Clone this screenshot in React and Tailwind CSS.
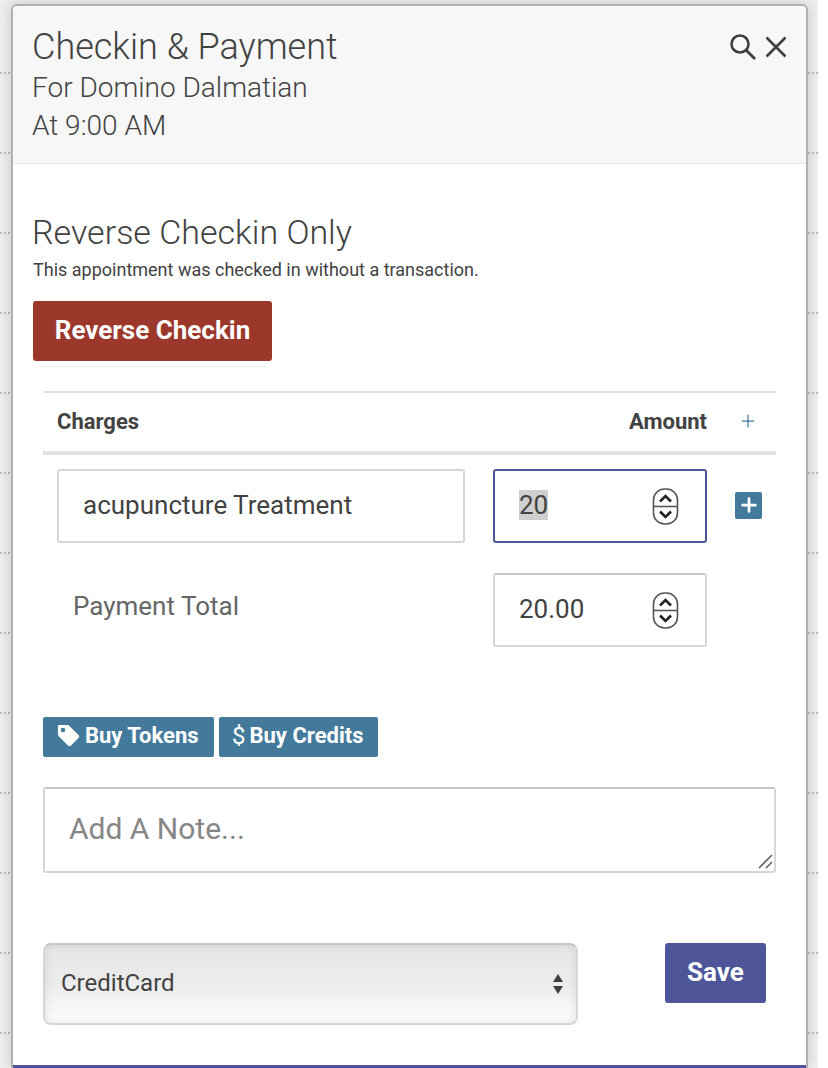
import React from 'react';
import { Plus } from 'lucide-react';

function Spinner() {
  return (
    <svg width="28" height="37" viewBox="0 0 28 37" fill="none" className="shrink-0">
      <rect x="2.5" y="1" width="24" height="35" rx="11" stroke="#555" strokeWidth="1.6" />
      <line x1="2.5" y1="18.5" x2="26.5" y2="18.5" stroke="#555" strokeWidth="1.6" />
      <path d="M9 13.5 L14.5 8 L20 13.5" stroke="#222" strokeWidth="2.6" />
      <path d="M9 23.5 L14.5 29 L20 23.5" stroke="#222" strokeWidth="2.6" />
    </svg>
  );
}

function TagIcon() {
  return (
    <svg width="23" height="23" viewBox="0 0 25 25" className="shrink-0">
      <path
        fill="#fff"
        fillRule="evenodd"
        d="M2 1 H11 C12 1 13 1.5 13.6 2.1 L23.4 11.9 C24.4 12.9 24.4 14.2 23.4 15.2 L15.2 23.4 C14.2 24.4 12.9 24.4 11.9 23.4 L2.1 13.6 C1.4 12.9 1 12 1 11 V2 C1 1.4 1.4 1 2 1 Z M6.5 4 A2.5 2.5 0 1 0 6.5 9 A2.5 2.5 0 1 0 6.5 4 Z"
      />
    </svg>
  );
}

function SearchIcon() {
  return (
    <svg width="28" height="28" viewBox="0 0 28 28" fill="none" className="shrink-0">
      <circle cx="11" cy="11" r="8.5" stroke="#3f3f3f" strokeWidth="2.6" />
      <path d="M17.5 17.5 L26 26" stroke="#3f3f3f" strokeWidth="2.8" />
    </svg>
  );
}

function CloseIcon() {
  return (
    <svg width="22" height="22" viewBox="0 0 22 22" fill="none" className="shrink-0">
      <path d="M1.5 1.5 L20.5 20.5 M20.5 1.5 L1.5 20.5" stroke="#3f3f3f" strokeWidth="2.6" />
    </svg>
  );
}

function Backdrop() {
  const rows = [72, 152, 232, 312, 392, 472, 552, 632, 712, 792, 872, 952, 1032];
  return (
    <div className="absolute inset-0 flex">
      <div className="w-[818px] h-full bg-[#efefef] relative">
        {rows.map((y) => (
          <div
            key={y}
            className="absolute left-0 right-0 border-t-2 border-dotted border-[#bdbdbd]"
            style={{ top: y }}
          />
        ))}
      </div>
      <div className="flex-1 bg-white" />
    </div>
  );
}

export default function App() {
  return (
    <div className="relative w-[828px] h-[1068px] overflow-hidden bg-white text-[#424242] font-['Roboto',sans-serif]">
      <Backdrop />

      <div className="absolute left-[11px] top-[4px] w-[797px] h-[1064px] bg-white border-2 border-b-0 border-[#b0b0b0] rounded-t-[6px] shadow-[0_0_14px_rgba(0,0,0,0.18)] flex flex-col overflow-hidden">
        {/* Header */}
        <div className="h-[158px] shrink-0 bg-[#f7f7f7] border-b border-[#e9e9e9] pl-[19px] pr-[19px] pt-[19px] flex justify-between">
          <div>
            <div className="text-[36px] leading-[44px] font-light">Checkin &amp; Payment</div>
            <div className="text-[28px] leading-[38px] font-light">For Domino Dalmatian</div>
            <div className="text-[28px] leading-[38px] font-light">At 9:00 AM</div>
          </div>
          <div className="flex items-start gap-[8px] pt-[8px]">
            <SearchIcon />
            <div className="pt-[3px]">
              <CloseIcon />
            </div>
          </div>
        </div>

        {/* Body */}
        <div className="flex-1 flex flex-col pl-[20px] pr-[30px]">
          <div className="mt-[44px] -ml-px text-[34px] leading-[48px] font-light">Reverse Checkin Only</div>
          <div className="mt-[2px] text-[18px] leading-[24px]">This appointment was checked in without a transaction.</div>
          <button className="mt-[19px] w-[239px] h-[60px] pb-[2px] rounded-[3px] bg-[#9c372c] text-white text-[26px] font-bold">
            Reverse Checkin
          </button>

          <div className="ml-[10px] mt-[30px]">
            <div className="h-[64px] pb-[2px] border-t-2 border-b-[4px] border-t-[#dfe1e4] border-b-[#dfe1e4] flex items-center pl-[14px]">
              <div className="text-[22px] font-bold flex-1">Charges</div>
              <div className="text-[22px] font-bold text-right">Amount</div>
              <div className="w-[69px] flex justify-end pr-[18px]">
                <Plus size={20} strokeWidth={1.5} className="text-[#437a9c]" />
              </div>
            </div>

            <div className="flex items-center pl-[14px] mt-[14px]">
              <div className="w-[408px] h-[74px] pb-[2px] border-2 border-[#d6d6da] rounded-[3px] flex items-center pl-[24px] text-[26px]">
                acupuncture Treatment
              </div>
              <div className="ml-[28px] w-[214px] h-[74px] border-2 border-[#4e5699] rounded-[3px] flex items-center justify-between pl-[24px] pr-[26px] text-[26px]">
                <span className="bg-[#cfcfcf] leading-[30px] mb-[2px]">20</span>
                <Spinner />
              </div>
              <button className="ml-[28px] mb-[2px] w-[27px] h-[27px] rounded-[2px] bg-[#437a9c] flex items-center justify-center">
                <Plus size={22} strokeWidth={3} className="text-white" />
              </button>
            </div>

            <div className="flex items-center pl-[30px] mt-[30px]">
              <div className="w-[420px] text-[26px] text-[#666] pb-[8px]">Payment Total</div>
              <div className="w-[214px] h-[74px] border-2 border-[#d6d6da] border-t-[#c6c6cc] rounded-[3px] flex items-center justify-between pl-[24px] pr-[26px] text-[26px]">
                <span className="mb-[2px]">20.00</span>
                <Spinner />
              </div>
            </div>

            <div className="flex gap-[5px] mt-[70px]">
              <button className="w-[171px] h-[40px] pl-[14px] pb-[3px] rounded-[2px] bg-[#437a9c] text-white text-[22px] font-bold flex items-center gap-[5px]">
                <TagIcon />
                Buy Tokens
              </button>
              <button className="w-[159px] h-[40px] pl-[13px] pb-[3px] rounded-[2px] bg-[#437a9c] text-white text-[22px] font-bold flex items-center">
                <span className="font-normal text-[24px] mr-[4px]">$</span>
                Buy Credits
              </button>
            </div>

            <div className="relative mt-[30px] h-[86px] border-2 border-[#d6d6da] border-t-[#c6c6cc] rounded-[3px] flex items-center pl-[24px] pb-[4px] text-[30px] text-[#868686]">
              Add A Note...
              <svg width="16" height="16" viewBox="0 0 16 16" className="absolute right-[0px] bottom-[1px]">
                <path d="M1 14 L14 1 M8 14 L14 8" stroke="#666" strokeWidth="1.6" />
              </svg>
            </div>

            <div className="flex items-start justify-between mt-[70px] pr-[10px]">
              <div className="relative w-[535px] h-[82px] rounded-[8px] border-2 border-[#d6d6da] border-t-[#c6c6cc] bg-gradient-to-b from-[#e6e6e6] via-[#ececec] to-[#fdfdfd] shadow-[inset_0_0_8px_rgba(0,0,0,0.1)] flex items-center pl-[16px] pb-[2px] text-[24px]">
                CreditCard
                <svg width="12" height="24" viewBox="0 0 12 24" className="absolute right-[12px] top-[28px]">
                  <path d="M6 1 L11 9 H1 Z M1 13 H11 L6 21 Z" fill="#3f3f3f" />
                </svg>
              </div>
              <button className="w-[101px] h-[60px] pb-[2px] rounded-[3px] bg-[#4e5699] text-white text-[26px] font-bold">
                Save
              </button>
            </div>
          </div>
        </div>

        <div className="absolute left-0 right-0 bottom-0 h-[3px] bg-[#4e5699]" />
      </div>
    </div>
  );
}
